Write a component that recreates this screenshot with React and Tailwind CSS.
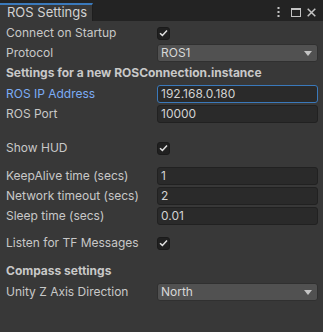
import React from "react";

const font = { fontFamily: "Inter, 'Noto Sans', sans-serif" };

function Check() {
  return (
    <div className="w-[13px] h-[13px] rounded-[3px] bg-[#202020] border border-[#1a1a1a] flex items-center justify-center">
      <svg width="9" height="8" viewBox="0 0 9 8">
        <path d="M1 4.2 L3.4 6.4 L8 1.4" fill="none" stroke="#e0e0e0" strokeWidth="1.5" />
      </svg>
    </div>
  );
}

function Row({ label, children, blue, className = "" }) {
  return (
    <div className={`flex items-center h-[20px] ${className}`}>
      <div className={`w-[157px] pl-[6px] shrink-0 ${blue ? "text-[#7cacf5]" : "text-[#c8c8c8]"}`}>{label}</div>
      <div className="flex-1 pr-[5px] flex items-center">{children}</div>
    </div>
  );
}

function Field({ value, focus }) {
  return (
    <div
      className={`w-full h-[18px] rounded-[3px] bg-[#2a2a2a] flex items-center pl-[3px] text-[#d2d2d2] ${
        focus ? "border border-[#3a79bb]" : "border border-[#212121]"
      }`}
    >
      {value}
    </div>
  );
}

function Dropdown({ value }) {
  return (
    <div className="w-full h-[18px] rounded-[3px] bg-[#515151] border border-[#303030] flex items-center justify-between pl-[3px] pr-[5px] text-[#d8d8d8]">
      <span>{value}</span>
      <svg width="8" height="5" viewBox="0 0 8 5">
        <path d="M0 0 H8 L4 5 Z" fill="#c4c4c4" />
      </svg>
    </div>
  );
}

export default function App() {
  return (
    <div className="w-[323px] h-[332px] bg-[#383838] text-[12px] flex flex-col overflow-hidden" style={font}>
      <div className="h-[21px] bg-[#232323] flex items-end shrink-0 relative">
        <div className="w-[93px] h-[18px] bg-[#383838] border-t-2 border-[#3a79bb] border-r border-r-[#1e1e1e] flex items-center pl-[7px] text-[#d2d2d2] text-[13px]">
          ROS Settings
        </div>
        <div className="absolute left-[277px] top-[7px] flex items-center">
          <svg width="3" height="10" viewBox="0 0 3 10">
            <rect x="0.5" y="0" width="2" height="2" fill="#c4c4c4" />
            <rect x="0.5" y="4" width="2" height="2" fill="#c4c4c4" />
            <rect x="0.5" y="8" width="2" height="2" fill="#c4c4c4" />
          </svg>
          <svg width="10" height="9" viewBox="0 0 10 9" className="ml-[11px]">
            <rect x="0.5" y="0.5" width="9" height="8" fill="none" stroke="#c4c4c4" />
            <rect x="0.5" y="0.5" width="9" height="1.5" fill="#c4c4c4" />
          </svg>
          <svg width="9" height="9" viewBox="0 0 9 9" className="ml-[6px]">
            <path d="M0.7 0.7 L8.3 8.3 M8.3 0.7 L0.7 8.3" stroke="#c4c4c4" strokeWidth="1.5" />
          </svg>
        </div>
      </div>
      <div className="pt-[2px] flex flex-col">
        <Row label="Connect on Startup"><Check /></Row>
        <Row label="Protocol"><Dropdown value="ROS1" /></Row>
        <div className="h-[20px] flex items-center pl-[6px] font-bold text-[#c8c8c8]">Settings for a new ROSConnection.instance</div>
        <Row label="ROS IP Address" blue className="mt-[1px]"><Field value="192.168.0.180" focus /></Row>
        <Row label="ROS Port"><Field value="10000" /></Row>
        <Row label="Show HUD" className="mt-[14px]"><Check /></Row>
        <Row label="KeepAlive time (secs)" className="mt-[8px]"><Field value="1" /></Row>
        <Row label="Network timeout (secs)"><Field value="2" /></Row>
        <Row label="Sleep time (secs)"><Field value="0.01" /></Row>
        <Row label="Listen for TF Messages" className="mt-[7px]"><Check /></Row>
        <div className="h-[20px] mt-[8px] flex items-center pl-[6px] font-bold text-[#c8c8c8]">Compass settings</div>
        <Row label="Unity Z Axis Direction" className="mt-[1px]"><Dropdown value="North" /></Row>
      </div>
    </div>
  );
}
